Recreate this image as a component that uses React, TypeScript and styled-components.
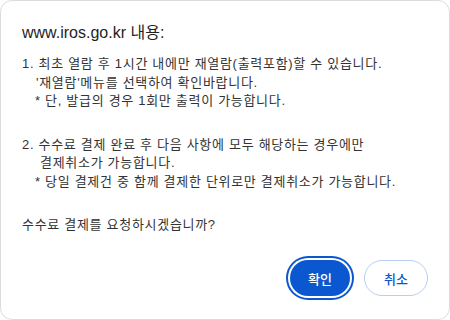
import styled, { createGlobalStyle } from "styled-components";

const GlobalStyle = createGlobalStyle`
  html, body {
    margin: 0;
    padding: 0;
    background: #ffffff;
  }
  body {
    width: 450px;
    height: 320px;
    overflow: hidden;
  }
`;

const Dialog = styled.div`
  box-sizing: border-box;
  width: 450px;
  height: 320px;
  display: flex;
  flex-direction: column;
  padding: 22px 21px 23px 21px;
  background: #ffffff;
  border: 1px solid #dcdcdc;
  border-radius: 12px;
  font-family: "Liberation Sans", "Noto Sans CJK KR", sans-serif;
  color: #1f1f1f;
`;

const Title = styled.h1`
  margin: 0;
  font-size: 16px;
  font-weight: 400;
  line-height: 20px;
  color: #1f1f1f;
`;

const Message = styled.div`
  margin-top: 12px;
  display: flex;
  flex-direction: column;
  gap: 25px;
  font-size: 13px;
  letter-spacing: 0.7px;
  line-height: 18.5px;
  color: #333333;
`;

const Group = styled.div`
  display: flex;
  flex-direction: column;
`;

const Line = styled.div<{ $indent?: number }>`
  padding-left: ${(p) => p.$indent ?? 0}px;
  white-space: nowrap;
`;

const Footer = styled.div`
  margin-top: auto;
  display: flex;
  justify-content: flex-end;
  align-items: center;
  gap: 10px;
`;

const Button = styled.button<{ $primary?: boolean }>`
  box-sizing: border-box;
  height: 36px;
  width: ${(p) => (p.$primary ? 60 : 64)}px;
  margin-right: ${(p) => (p.$primary ? 4 : 0)}px;
  border-radius: 18px;
  font-family: "Liberation Sans", "Noto Sans CJK KR", sans-serif;
  font-size: 13px;
  font-weight: 500;
  cursor: pointer;
  border: ${(p) => (p.$primary ? "none" : "1px solid #b9cdf2")};
  background: ${(p) => (p.$primary ? "#0b57d0" : "#ffffff")};
  color: ${(p) => (p.$primary ? "#ffffff" : "#0b57d0")};
  box-shadow: ${(p) =>
    p.$primary ? "0 0 0 2px #ffffff, 0 0 0 4px #0b57d0" : "none"};
`;

export default function App() {
  return (
    <>
      <GlobalStyle />
      <Dialog>
        <Title>www.iros.go.kr 내용:</Title>
        <Message>
          <Group>
            <Line>1. 최초 열람 후 1시간 내에만 재열람(출력포함)할 수 있습니다.</Line>
            <Line $indent={14}>'재열람'메뉴를 선택하여 확인바랍니다.</Line>
            <Line $indent={13}>* 단, 발급의 경우 1회만 출력이 가능합니다.</Line>
          </Group>
          <Group>
            <Line>2. 수수료 결제 완료 후 다음 사항에 모두 해당하는 경우에만</Line>
            <Line $indent={18}>결제취소가 가능합니다.</Line>
            <Line $indent={13}>* 당일 결제건 중 함께 결제한 단위로만 결제취소가 가능합니다.</Line>
          </Group>
          <Group>
            <Line>수수료 결제를 요청하시겠습니까?</Line>
          </Group>
        </Message>
        <Footer>
          <Button $primary>확인</Button>
          <Button>취소</Button>
        </Footer>
      </Dialog>
    </>
  );
}
